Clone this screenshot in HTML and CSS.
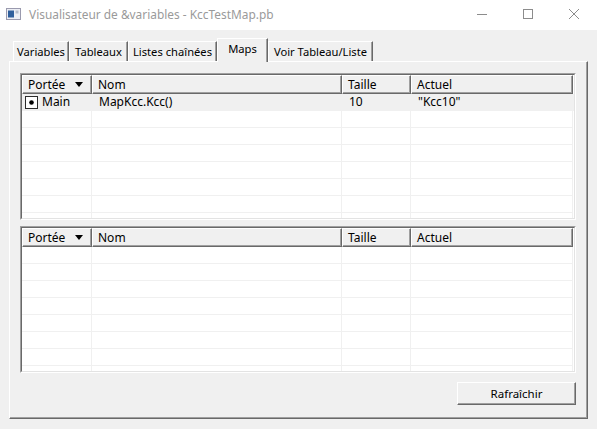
FILE: index.html
```html
<!DOCTYPE html>
<html lang="fr">
<head>
<meta charset="utf-8">
<title>Visualisateur de &amp;variables - KccTestMap.pb</title>
<link rel="stylesheet" href="styles.css">
</head>
<body>
<div class="window">
  <div class="titlebar">
    <svg class="app-icon" width="15" height="12" viewBox="0 0 15 12">
      <rect x="0.5" y="0.5" width="14" height="11" fill="#eceef4" stroke="#9a9aae"/>
      <rect x="2" y="2.5" width="6" height="7" fill="#2f5f9c"/>
      <rect x="9.5" y="2.5" width="3" height="3" fill="#b4bccb"/>
    </svg>
    <span class="title">Visualisateur de &amp;variables - KccTestMap.pb</span>
    <div class="controls">
      <div class="ctl"><svg width="10" height="10" viewBox="0 0 10 10"><line x1="0" y1="5.5" x2="10" y2="5.5" stroke="#8c8c8c" stroke-width="1"/></svg></div>
      <div class="ctl"><svg width="10" height="10" viewBox="0 0 10 10"><rect x="0.5" y="0.5" width="9" height="9" fill="none" stroke="#8c8c8c" stroke-width="1"/></svg></div>
      <div class="ctl"><svg width="10" height="10" viewBox="0 0 10 10"><path d="M0 0 L10 10 M10 0 L0 10" stroke="#8c8c8c" stroke-width="1"/></svg></div>
    </div>
  </div>
  <div class="client">
    <div class="tabs">
      <div class="tab w-var">Variables</div>
      <div class="tab w-tab">Tableaux</div>
      <div class="tab w-lst">Listes chaînées</div>
      <div class="tab w-map active">Maps</div>
      <div class="tab w-voir">Voir Tableau/Liste</div>
    </div>
    <div class="panel">
      <div class="list">
        <div class="list-inner">
          <div class="header">
            <div class="hcell">Portée<span class="sort"></span></div>
            <div class="hcell">Nom</div>
            <div class="hcell">Taille</div>
            <div class="hcell">Actuel</div>
          </div>
          <div class="body">
            <div class="row selected">
              <div class="cell cell-scope"><svg class="scope-icon" width="13" height="13" viewBox="0 0 13 13"><rect x="0.5" y="0.5" width="12" height="12" fill="#fff" stroke="#2b2b2b"/><circle cx="6.5" cy="6.5" r="2.3" fill="#000"/></svg>Main</div>
              <div class="cell">MapKcc.Kcc()</div>
              <div class="cell">10</div>
              <div class="cell">"Kcc10"</div>
            </div>
            <div class="row"><div class="cell"></div><div class="cell"></div><div class="cell"></div><div class="cell"></div></div>
            <div class="row"><div class="cell"></div><div class="cell"></div><div class="cell"></div><div class="cell"></div></div>
            <div class="row"><div class="cell"></div><div class="cell"></div><div class="cell"></div><div class="cell"></div></div>
            <div class="row"><div class="cell"></div><div class="cell"></div><div class="cell"></div><div class="cell"></div></div>
            <div class="row"><div class="cell"></div><div class="cell"></div><div class="cell"></div><div class="cell"></div></div>
            <div class="row"><div class="cell"></div><div class="cell"></div><div class="cell"></div><div class="cell"></div></div>
            <div class="row"><div class="cell"></div><div class="cell"></div><div class="cell"></div><div class="cell"></div></div>
          </div>
        </div>
      </div>
      <div class="list">
        <div class="list-inner">
          <div class="header">
            <div class="hcell">Portée<span class="sort"></span></div>
            <div class="hcell">Nom</div>
            <div class="hcell">Taille</div>
            <div class="hcell">Actuel</div>
          </div>
          <div class="body">
            <div class="row"><div class="cell"></div><div class="cell"></div><div class="cell"></div><div class="cell"></div></div>
            <div class="row"><div class="cell"></div><div class="cell"></div><div class="cell"></div><div class="cell"></div></div>
            <div class="row"><div class="cell"></div><div class="cell"></div><div class="cell"></div><div class="cell"></div></div>
            <div class="row"><div class="cell"></div><div class="cell"></div><div class="cell"></div><div class="cell"></div></div>
            <div class="row"><div class="cell"></div><div class="cell"></div><div class="cell"></div><div class="cell"></div></div>
            <div class="row"><div class="cell"></div><div class="cell"></div><div class="cell"></div><div class="cell"></div></div>
            <div class="row"><div class="cell"></div><div class="cell"></div><div class="cell"></div><div class="cell"></div></div>
            <div class="row"><div class="cell"></div><div class="cell"></div><div class="cell"></div><div class="cell"></div></div>
          </div>
        </div>
      </div>
      <div class="footer">
        <button class="btn">Rafraîchir</button>
      </div>
    </div>
  </div>
</div>
</body>
</html>
```
FILE: styles.css
```css
* { box-sizing: border-box; }
html, body { margin: 0; padding: 0; }
body {
  width: 597px;
  height: 429px;
  overflow: hidden;
  background: #f0f0f0;
  font-family: "Noto Sans", "DejaVu Sans", sans-serif;
  font-size: 12px;
  color: #000;
}
.window { width: 597px; height: 429px; display: flex; flex-direction: column; }

.titlebar {
  height: 30px;
  background: #fff;
  display: flex;
  align-items: center;
  flex: none;
}
.app-icon { margin-left: 6px; margin-top: -2px; flex: none; }
.title { margin-left: 8px; color: #9a9a9a; font-size: 11.9px; margin-top: -2px; }
.controls { margin-left: auto; display: flex; height: 30px; }
.ctl { width: 46px; height: 30px; display: flex; align-items: center; justify-content: center; padding-bottom: 2px; }

.client { flex: 1; display: flex; flex-direction: column; padding-top: 8px; }

.tabs {
  display: flex;
  align-items: flex-end;
  height: 24px;
  margin-left: 13px;
  margin-bottom: -1px;
  position: relative;
  z-index: 1;
}
.tab {
  height: 20px;
  margin-bottom: 1px;
  border-top: 1px solid #fff;
  border-left: 1px solid #fff;
  border-right: 1px solid #696969;
  box-shadow: inset -1px 0 0 #a0a0a0;
  background: #f0f0f0;
  text-align: center;
  font-size: 11.2px;
  line-height: 20px;
  white-space: nowrap;
  overflow: hidden;
}
.tab.active {
  height: 24px;
  margin-bottom: 0;
  line-height: 20px;
  padding-bottom: 3px;
}
.w-var { width: 56px; }
.w-tab { width: 59px; }
.w-lst { width: 89px; }
.w-map { width: 51px; }
.w-voir { width: 105px; }

.panel {
  margin: 0 9px;
  height: 358px;
  border-top: 1px solid #fff;
  border-left: 1px solid #fff;
  border-right: 1px solid #696969;
  border-bottom: 1px solid #696969;
  box-shadow: inset -1px -1px 0 #a0a0a0;
  padding: 11px 11px 0 10px;
  display: flex;
  flex-direction: column;
  gap: 6px;
}

.list {
  height: 147px;
  border-top: 1px solid #a0a0a0;
  border-left: 1px solid #a0a0a0;
  border-right: 1px solid #fff;
  border-bottom: 1px solid #fff;
  flex: none;
}
.list-inner {
  height: 100%;
  border-top: 1px solid #696969;
  border-left: 1px solid #696969;
  border-right: 1px solid #e3e3e3;
  border-bottom: 1px solid #e3e3e3;
  background: #fff;
  overflow: hidden;
  display: flex;
  flex-direction: column;
}

.header, .row {
  display: grid;
  grid-template-columns: 70px 250px 69px 162px;
}
.header { height: 19px; flex: none; }
.hcell {
  background: #f0f0f0;
  border-top: 1px solid #fff;
  border-left: 1px solid #fff;
  border-right: 1px solid #696969;
  border-bottom: 1px solid #696969;
  box-shadow: inset -1px -1px 0 #a0a0a0;
  padding-left: 5px;
  line-height: 16px;
  white-space: nowrap;
  display: flex;
  align-items: center;
}
.sort {
  width: 0;
  height: 0;
  border-left: 4px solid transparent;
  border-right: 4px solid transparent;
  border-top: 5px solid #000;
  margin-left: auto;
  margin-right: 8px;
}

.body { flex: 1; overflow: hidden; }
.row { height: 17px; }
.row.selected { background: #f0f0f0; }
.cell {
  border-right: 1px solid #f0f0f0;
  border-bottom: 1px solid #f0f0f0;
  padding-left: 7px;
  line-height: 16px;
  white-space: nowrap;
  display: flex;
  align-items: center;
}
.cell-scope { padding-left: 3px; }
.scope-icon { margin-right: 4px; flex: none; }

.footer {
  display: flex;
  justify-content: flex-end;
  padding-top: 3px;
}
.btn {
  width: 119px;
  height: 23px;
  font: inherit;
  font-size: 11.5px;
  color: #000;
  background: #f0f0f0;
  border-top: 1px solid #fff;
  border-left: 1px solid #fff;
  border-right: 1px solid #696969;
  border-bottom: 1px solid #696969;
  box-shadow: inset -1px -1px 0 #a0a0a0;
  padding: 0;
  margin: 0;
}
```
